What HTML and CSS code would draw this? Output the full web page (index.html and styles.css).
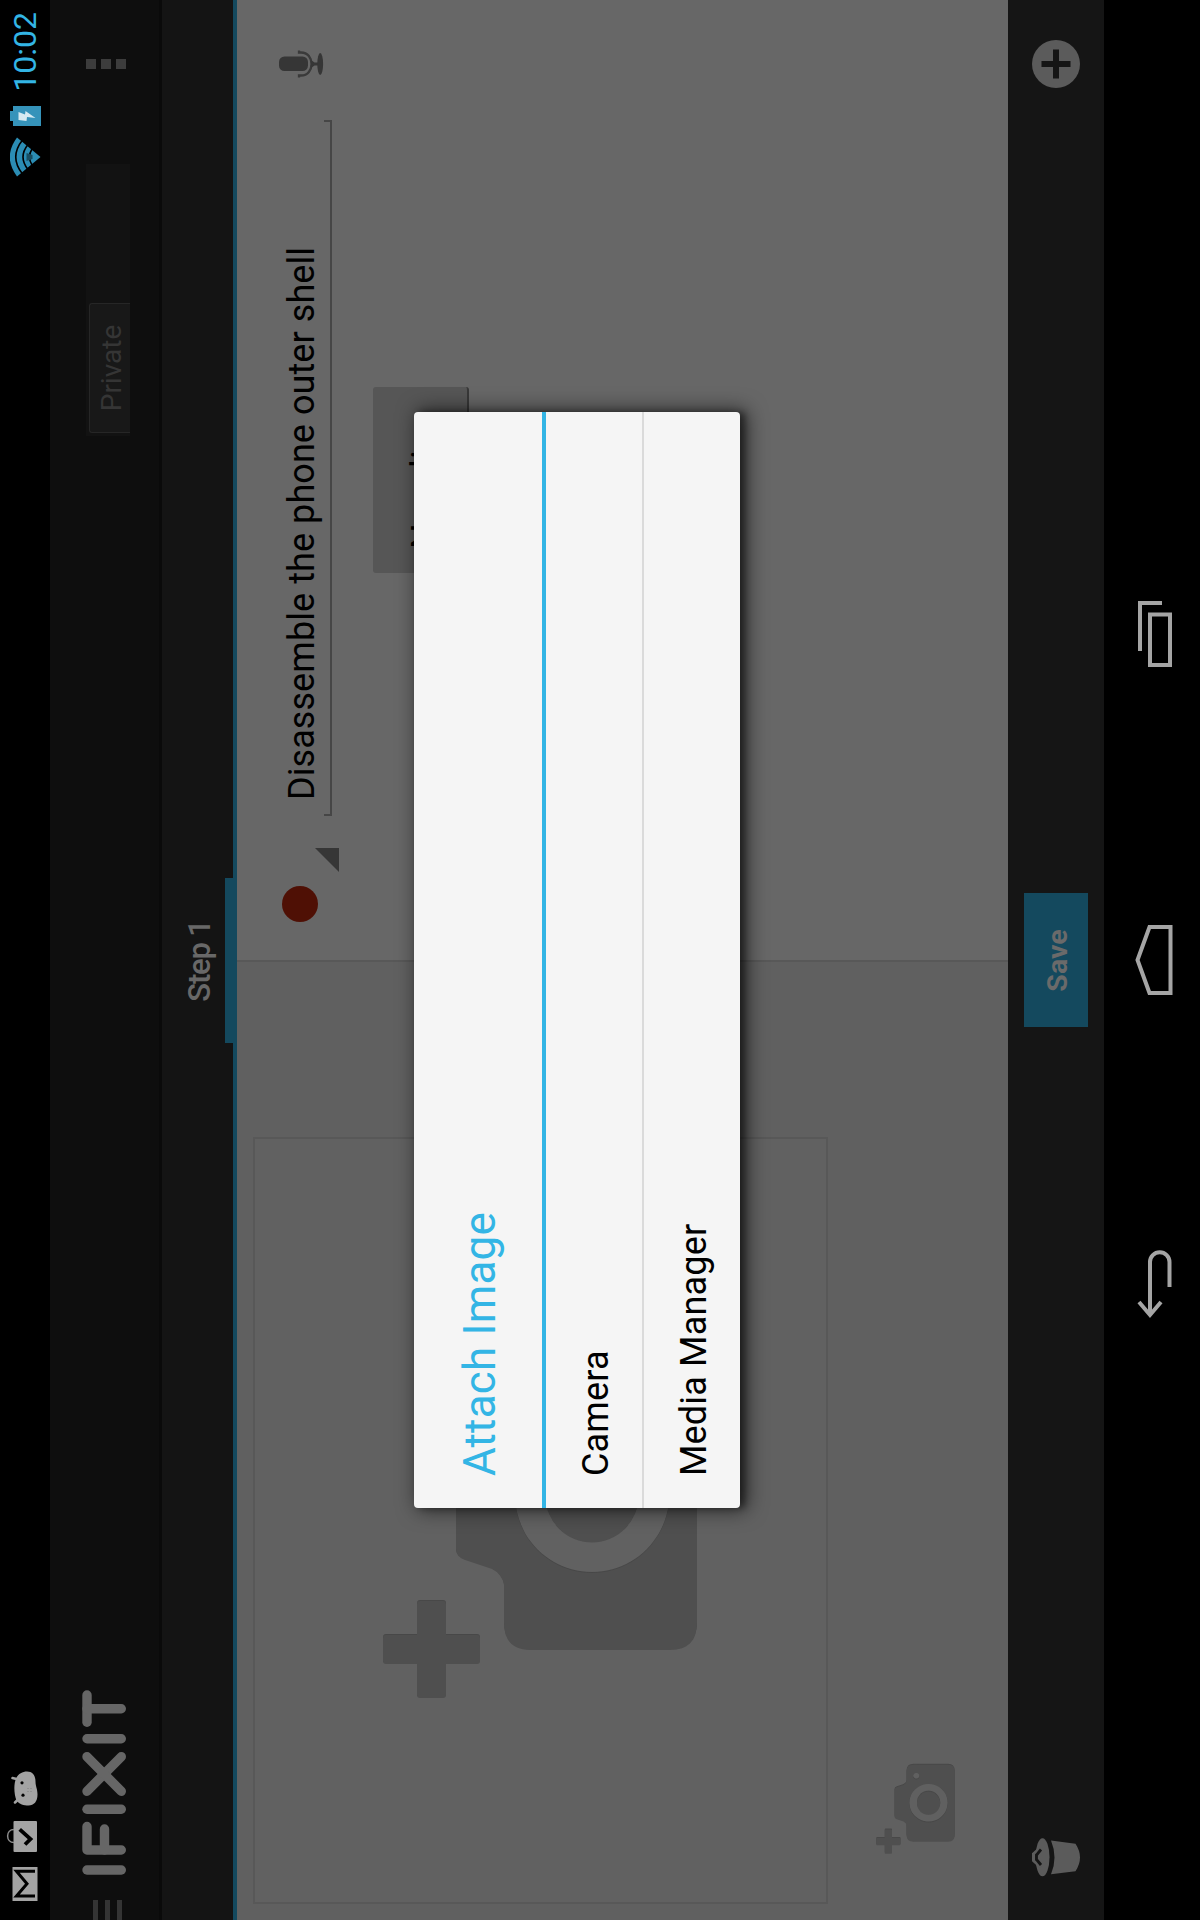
FILE: index.html
```html
<!DOCTYPE html>
<html lang="en">
<head>
<meta charset="utf-8">
<title>iFixit – Step 1</title>
<link rel="stylesheet" href="styles.css">
</head>
<body>
<svg width="0" height="0" class="defs" aria-hidden="true">
  <symbol id="add-photo" viewBox="222 382 360 318">
    <path d="M260 383h23q3 0 3 3v31h31q3 0 3 3v23q0 3-3 3h-31v31q0 3-3 3h-23q-3 0-3-3v-31h-31q-3 0-3-3v-23q0-3 3-3h31v-31q0-3 3-3z"/>
    <path fill-rule="evenodd" d="M298 504H336Q347 502 352 492L361 465Q364 456 372 456H478Q486 456 489 465L498 492Q503 502 514 504H552Q579 504 579 531V670Q579 697 552 697H298Q271 697 271 670V531Q271 504 298 504ZM425 515a77 77 0 1 0 .1 0zM533 530a13 13 0 1 0 .1 0z"/>
    <circle cx="425" cy="592" r="46.500"/>
  </symbol>
</svg>
<div class="viewport">
  <div class="device">
    <header class="status">
      <div class="notifications">
        <svg width="34" height="26" viewBox="19 12.500 34 26"><path fill="#a3a3a3" d="M19 13h34v25H19z"/><path d="M24 35.500V17l12.300 10.500L48.700 17v18.500" fill="none" stroke="#000" stroke-width="3"/></svg>
        <svg width="31" height="32" viewBox="68 7 31 32"><path fill="#a3a3a3" d="M69 14.500h29q1 0 1 1V37q0 1-1 1H69q-1 0-1-1V15.500q0-1 1-1z"/><path d="M77.500 15c0-8.500 13-8.500 13 0" fill="none" stroke="#8d8d8d" stroke-width="1.500"/><path d="M90.700 20.700L81 31.500l-5.500-5.500" fill="none" stroke="#000" stroke-width="3.800"/></svg>
        <svg width="35" height="27" viewBox="114.500 11.500 35 27"><path d="M142.500 13l-1 4M118 15.500l3 3" stroke="#a3a3a3" stroke-width="2.500" stroke-linecap="round"/><path fill="#a3a3a3" d="M120 17C126 14.500 136 14 142 16.500C147 19 149 23 149 27.500C149 33 145 36 139 36C134 36 132 38 126 38C119 38 115 34.500 115 29C115 24 116 20 120 17z"/><circle cx="137.700" cy="22.500" r="1.600"/><circle cx="125.300" cy="23.500" r="1.600"/><path d="M129 28v4M132 28v4" stroke="#777" stroke-width=".8" stroke-dasharray="1 2"/></svg>
      </div>
      <div class="system">
        <svg width="40" height="31" viewBox="0 0 40 31"><path fill="#2b8db4" d="M20 30.500L.5 7Q20-7.500 39.500 7z"/><path d="M3 12.500Q20-1 37 12.500M7.500 18Q20 8 32.500 18M12 22Q20 17 28 22" fill="none" stroke="#000" stroke-width="1.600"/><path fill="#184d61" d="M16 16.500h8l-2 6h-4z"/></svg>
        <svg width="20" height="31" viewBox="0 0 20 31"><path fill="#3593ba" d="M5 0h10v3h5v28H0V3h5z"/><path fill="#d5eaf2" d="M6 8.500h8L11.500 15l3.500 .5L8 25.500l1-8.500-4-.5z"/></svg>
        <span class="clock">10:02</span>
      </div>
    </header>

    <div class="actionbar">
      <svg class="drawer" width="20" height="29" viewBox="0 0 20 29"><path fill="#343434" d="M0 0h20v5H0zM0 12h20v5H0zM0 24h20v5H0z"/></svg>
      <svg class="logo" width="185" height="44" viewBox="45 82 185 44" role="img" aria-label="iFixit"><g fill="none" stroke="#666" stroke-width="9.400" stroke-linecap="round" stroke-linejoin="round"><line x1="50" y1="87" x2="50" y2="121.300"/><polyline points="93.500,87 70,87 70,121.300"/><line x1="70" y1="104.500" x2="91" y2="104.500"/><line x1="110.700" y1="87" x2="110.700" y2="121.300"/><line x1="128.700" y1="87" x2="163.300" y2="121.300"/><line x1="163.300" y1="87" x2="128.700" y2="121.300"/><line x1="181.300" y1="87" x2="181.300" y2="121.300"/><line x1="197.700" y1="87" x2="225" y2="87"/><line x1="211.300" y1="87" x2="211.300" y2="121.300"/></g></svg>
      <div class="switch"><span class="thumb">Private</span></div>
      <div class="overflow"><i></i><i></i><i></i></div>
    </div>

    <nav class="tabs"><span class="tab">Step 1</span></nav>

    <main class="content">
      <section class="media">
        <div class="photo"><svg class="big" width="360" height="318"><use href="#add-photo"/></svg></div>
        <svg class="small" width="90" height="79.500"><use href="#add-photo"/></svg>
      </section>
      <section class="lines">
        <div class="line">
          <span class="bullet"></span>
          <svg class="caret" width="24" height="24" viewBox="0 0 24 24"><path fill="#363636" d="M24 0v24H0z"/></svg>
          <div class="field"><span>Disassemble the phone outer shell</span></div>
          <svg class="mic" width="28" height="45" viewBox="0 0 28 45"><rect x="7" y="0" width="14.500" height="29" rx="5.500" fill="#363636"/><path d="M.5 20H2.500V22C2.500 36 25.500 36 25.500 22V20H27.500" fill="none" stroke="#3a3a3a" stroke-width="2.300"/><path fill="#363636" d="M10 32h8l-2.500 3.500V39h-3v-3.500z"/><ellipse cx="14" cy="41.200" rx="11" ry="2.900" fill="#363636"/></svg>
        </div>
        <button class="newline">New line</button>
      </section>
    </main>

    <footer class="bottombar">
      <svg width="40" height="50" viewBox="43.500 1031 40 50"><path fill="#5b5b5b" d="M46.300 1051Q63 1058 80 1051L76.700 1075.500Q63 1084.500 49.300 1075.500z"/><ellipse cx="63.300" cy="1042.500" rx="19" ry="7" fill="#5b5b5b"/><path d="M53.500 1040.500L60 1033.500h6.500l6.500 7" fill="none" stroke="#5b5b5b" stroke-width="3"/><path d="M55.500 1041l5.500-4.500h4.500l5.500 4.500" fill="none" stroke="#151515" stroke-width="2.800"/></svg>
      <button class="save">Save</button>
      <svg width="48" height="48" viewBox="0 0 48 48"><circle cx="24" cy="24" r="24" fill="#5b5b5b"/><path d="M24 9.500v29M9.500 24h29" stroke="#151515" stroke-width="6"/></svg>
    </footer>

    <div class="navbar">
      <svg width="70" height="38" viewBox="601 1135 70 38" class="back"><path d="M618 1139L605 1150L618 1161M605 1150H658A9.700 9.700 0 0 1 658 1169.500H633" fill="none" stroke="#a5a5a5" stroke-width="4"/></svg>
      <svg width="70" height="38" viewBox="925 1134.500 70 38" class="home"><path d="M927 1149L960 1137L993 1149V1170H927Z" fill="none" stroke="#a5a5a5" stroke-width="4"/></svg>
      <svg width="66" height="34" viewBox="1253 1138 66 34" class="recent"><path d="M1255 1150h50.500v20h-50.500zM1269 1140h48v22" fill="none" stroke="#a5a5a5" stroke-width="4"/></svg>
    </div>

    <div class="dialog" role="dialog">
      <h1>Attach Image</h1>
      <ul><li>Camera</li><li>Media Manager</li></ul>
    </div>
  </div>
</div>
</body>
</html>
```
FILE: styles.css
```css
* { box-sizing: border-box; margin: 0; padding: 0; }
body { background: #000; font-family: Roboto, "Liberation Sans", sans-serif; }
svg { display: block; flex: none; }
.defs { position: absolute; }
.viewport { width: 1200px; height: 1920px; overflow: hidden; }

/* Landscape tablet screen, turned a quarter counter-clockwise */
.device {
  position: relative;
  display: flex;
  flex-direction: column;
  width: 1920px;
  height: 1200px;
  transform-origin: 0 0;
  transform: translateY(1920px) rotate(-90deg);
}

.status { display: flex; justify-content: space-between; height: 50px; padding: 0 12px 0 19px; background: #000; }
.notifications { display: flex; align-items: flex-end; gap: 15px; height: 38px; }
.system { display: flex; align-items: center; gap: 11px; height: 50px; }
.clock { width: 83px; text-align: right; color: #33b5e5; font-size: 32px; line-height: 51px; white-space: nowrap; }

.actionbar { display: flex; align-items: center; height: 112px; padding-bottom: 2px; background: #0e0e0e; border-bottom: 3px solid #0a0a0a; }
.drawer { margin-top: 7px; }
.logo { margin-left: 25px; }
.switch { display: flex; align-items: flex-end; width: 272px; height: 44px; margin-left: auto; margin-top: 9px; padding-left: 3px; background: #121212; }
.thumb { width: 130px; height: 41px; border: 1px solid #262626; border-bottom: 0; border-radius: 3px 3px 0 0; background: #181818; color: #353535; font-size: 28px; line-height: 43px; text-align: center; }
.overflow { display: flex; flex-direction: column; gap: 5px; margin: 5px 59px 0 95px; }
.overflow i { width: 10px; height: 10px; background: #3c3c3c; }

.tabs { display: flex; justify-content: center; height: 75px; padding-right: 2px; background: #141414; border-bottom: 4px solid #14495e; }
.tab { width: 165px; height: 71px; border-bottom: 8px solid #14495e; color: #686868; font-size: 31px; font-weight: 500; letter-spacing: -1.2px; line-height: 76px; text-align: center; }

.content { display: flex; height: 771px; }
.media { display: flex; gap: 48px; flex-direction: column; width: 960px; padding: 16px 0 0 16px; background: #606060; border-right: 2px solid #585858; }
.photo { width: 767px; height: 575px; padding: 127px 0 0 203px; border: 2px solid #585858; background: #616161; }
.big, .small { fill: #4f4f4f; filter: drop-shadow(1px 0 0 #484848); }
.small { margin-left: 50px; }
.lines { flex: 1; background: #676767; }
.line { display: flex; height: 136px; padding: 42px 50px 0 38px; }
.bullet { width: 36px; height: 36px; margin: 3px 14px 0 0; border-radius: 50%; background: #4f1005; }
.caret { margin-top: 36px; }
.field { position: relative; width: 696px; height: 53px; margin: 0 42px 0 32px; padding-left: 16px; font-size: 36px; letter-spacing: .07px; line-height: 47px; white-space: nowrap; border-bottom: 2px solid #464646; }
.field::before, .field::after { content: ""; position: absolute; bottom: 0; width: 2px; height: 6px; background: #464646; }
.field::before { left: 0; }
.field::after { right: 0; }
.newline { display: block; width: 186px; height: 96px; margin-left: 387px; padding-top: 4px; border: 0; border-bottom: 2px solid #383838; border-radius: 3px; background: #565656; color: #000; font: 36px/96px Roboto, sans-serif; letter-spacing: .1px; }

.bottombar { display: flex; align-items: center; justify-content: space-between; height: 96px; padding: 0 40px 0 43px; background: #151515; }
.save { width: 134px; height: 64px; padding-top: 2px; border: 0; background: #14495e; color: #6a6a6a; font: bold 28.5px/64px Roboto, sans-serif; margin-left: 4px; }

.navbar { display: flex; height: 96px; padding: 31px 0 0 601px; background: #000; }
.home { margin-left: 254px; }
.recent { margin: 3px 0 0 258px; }

.dialog { position: absolute; left: 412px; top: 414px; width: 1096px; height: 326px; border-radius: 4px; background: #f5f5f5; box-shadow: 0 5px 20px 2px rgba(0,0,0,.6), 0 5px 6px rgba(0,0,0,.4); }
.dialog h1 { height: 132px; padding-left: 32px; border-bottom: 4px solid #33b5e5; color: #33b5e5; font-size: 44px; font-weight: 400; letter-spacing: .18px; line-height: 132px; }
.dialog ul { list-style: none; }
.dialog li { height: 96px; padding-left: 32px; color: #000; font-size: 36px; letter-spacing: .17px; line-height: 100px; }
.dialog li + li { height: 98px; border-top: 2px solid #dadada; }
```
